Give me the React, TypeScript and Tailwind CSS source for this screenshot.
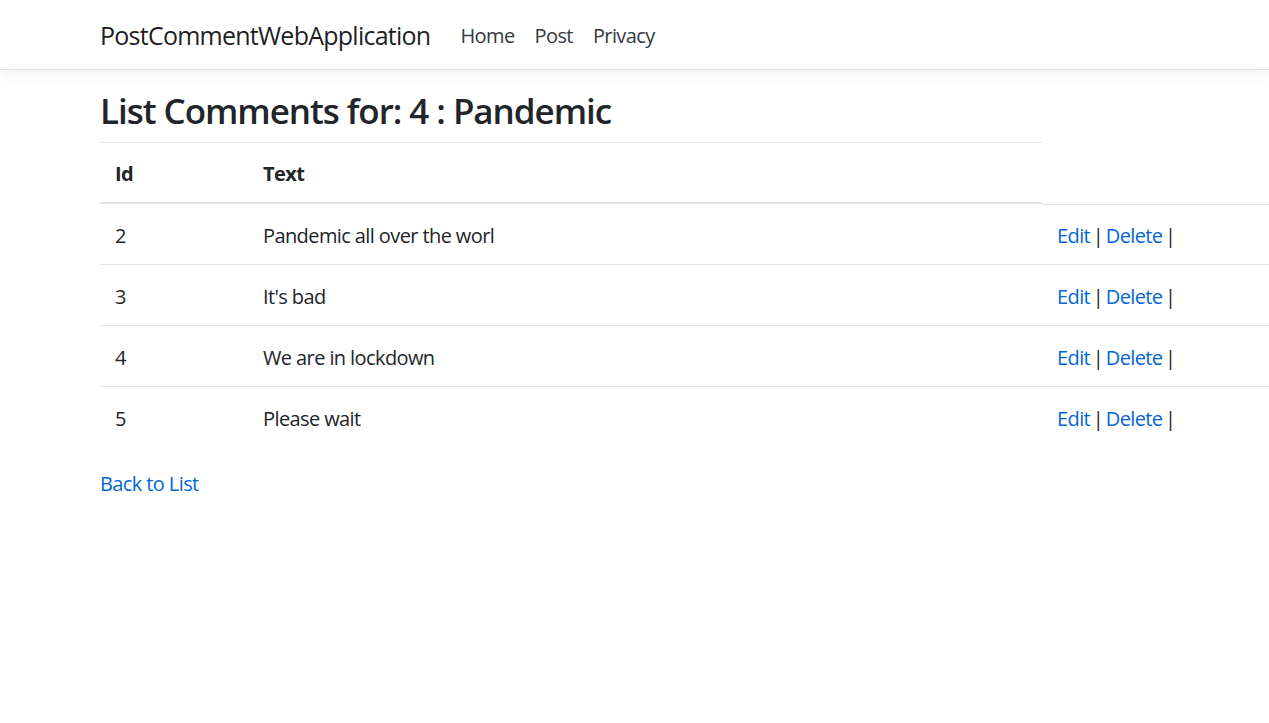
const comments = [
  { id: 2, text: 'Pandemic all over the worl' },
  { id: 3, text: "It's bad" },
  { id: 4, text: 'We are in lockdown' },
  { id: 5, text: 'Please wait' },
];

const font = { fontFamily: '"Open Sans", "Noto Sans", sans-serif' };

export default function App() {
  return (
    <div className="min-h-screen bg-white overflow-x-hidden text-[20px] leading-[30px] tracking-[-0.03em] text-[#212529]" style={font}>
      {/* Navbar */}
      <header className="h-[70px] border-b border-[#dee2e6] bg-white shadow-[0_5px_15px_rgba(0,0,0,0.05)]">
        <nav className="h-full flex items-center pl-[100px] pt-[2px]">
          <a className="text-[25px] leading-[37px] tracking-[-0.03em] text-[rgba(0,0,0,0.9)] mr-[20px]">PostCommentWebApplication</a>
          <ul className="flex">
            {['Home', 'Post', 'Privacy'].map((l) => (
              <li key={l}>
                <a className="block px-[10px] text-[#343a40]">{l}</a>
              </li>
            ))}
          </ul>
        </nav>
      </header>

      <main className="pl-[100px] pt-[20px]">
        <h3 className="text-[35px] leading-[42px] font-semibold tracking-[-0.03em] pt-[1px] mb-[10px] -mt-[1px]">
          List Comments for: 4 : Pandemic
        </h3>

        <div className="w-[1400px] mb-[20px]">
          <div className="w-[942px] grid grid-cols-[148px_794px] border-t border-b-2 border-[#dee2e6] font-bold">
            <div className="px-[15px] pt-[16px] pb-[13px]">Id</div>
            <div className="px-[15px] pt-[16px] pb-[13px]">Text</div>
          </div>
          {comments.map((c, i) => (
            <div
              key={c.id}
              className={`grid grid-cols-[148px_794px_1fr] ${i < comments.length - 1 ? 'border-b border-[#dee2e6]' : ''}`}
            >
              <div className="px-[15px] pt-[17px] pb-[13px]">{c.id}</div>
              <div className="px-[15px] pt-[17px] pb-[13px]">{c.text}</div>
              <div className={`px-[15px] pt-[17px] pb-[13px] [word-spacing:-2px] ${i === 0 ? 'shadow-[inset_0_1px_0_#dee2e6]' : ''}`}>
                <a className="text-[#0366d6]">Edit</a> | <a className="text-[#0366d6]">Delete</a> |
              </div>
            </div>
          ))}
        </div>

        <a className="block pt-[2px] text-[#0366d6]">Back to List</a>
      </main>
    </div>
  );
}
